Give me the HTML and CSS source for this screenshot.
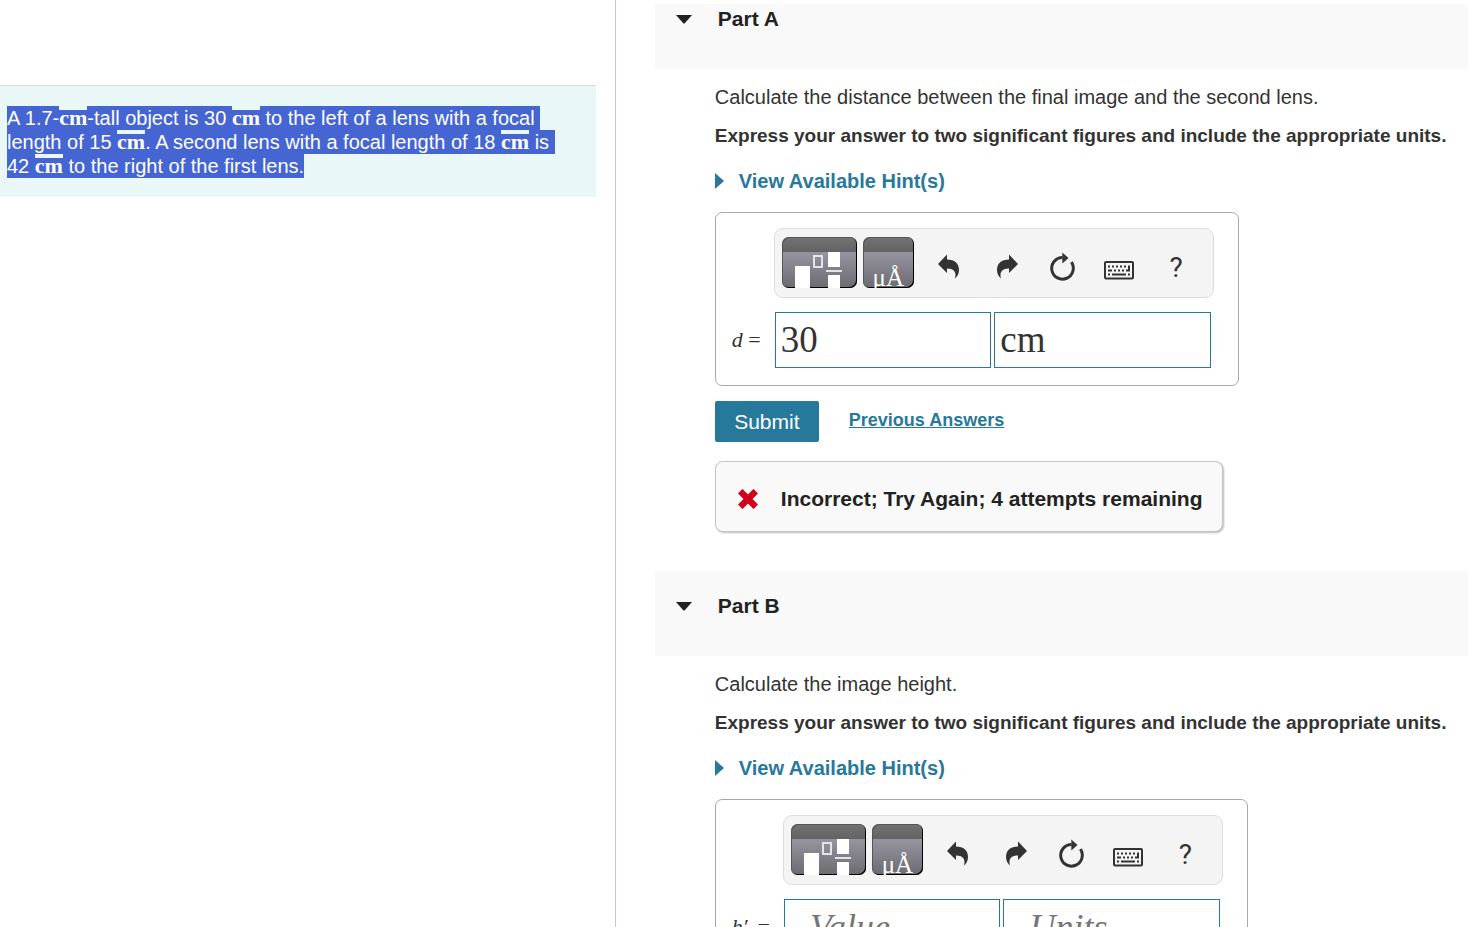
FILE: index.html
```
<!DOCTYPE html>
<html lang="en">
<head>
    <meta charset="UTF-8">
    <title>Part A - Part B</title>
    <link rel="stylesheet" href="styles.css">
</head>
<body>
    <svg class="sprite" aria-hidden="true">
        <symbol id="icon-templates" viewBox="0 0 75 51">
            <rect x="13" y="29" width="15" height="24" fill="#fff"/>
            <rect x="32" y="19" width="8" height="11" fill="none" stroke="#e4e4e8" stroke-width="2"/>
            <rect x="46" y="15" width="12" height="15" fill="#fff"/>
            <rect x="44" y="33" width="16" height="2" fill="#e4e4e8"/>
            <rect x="46" y="38" width="12" height="15" fill="#fff"/>
        </symbol>
        <symbol id="icon-undo" viewBox="0 0 57 51">
            <path d="M18 27 27 17.5V22.5C34.5 22.5 39 26.5 39 33C39 37 37 40 35 41.5C36.500 36 35 31.500 27 31.500V36Z"/>
        </symbol>
        <symbol id="icon-redo" viewBox="0 0 57 51">
            <path d="M41 27 32 17.500V22.500C24.500 22.500 20 26.500 20 33C20 37 22 40 24 41.500C22.500 36 24 31.500 32 31.500V36Z"/>
        </symbol>
        <symbol id="icon-reset" viewBox="0 0 57 51">
            <path d="M37.400 25.200A10.800 10.800 0 1 1 28.500 20.500" fill="none" stroke="#333" stroke-width="3"/>
            <path d="M28.300 15.500 34.500 21 28.300 26.500Z"/>
        </symbol>
        <symbol id="icon-keyboard" viewBox="0 0 57 51">
            <rect x="14" y="25" width="28" height="16.500" rx="1" fill="none" stroke="#333" stroke-width="2"/>
            <path d="M17 28.500h2v2h-2zM21 28.500h2v2h-2zM25 28.500h2v2h-2zM29 28.500h2v2h-2zM33 28.500h2v2h-2zM37 28.500h2v6h-4v-2h2zM17 32.500h4v2h-4zM23 32.500h2v2h-2zM27 32.500h2v2h-2zM31 32.500h2v2h-2zM17 36.500h2v2h-2zM21 36.500h14v2h-14zM37 36.500h2v2h-2z"/>
        </symbol>
    </svg>

    <div class="page">
        <aside class="problem">
            <p class="intro"><mark>A 1.7-<span class="unit">cm</span>-tall object is 30 <span class="unit">cm</span> to the left of a lens with a focal&nbsp;</mark><br>
            <mark>length of 15 <span class="unit">cm</span>. A second lens with a focal length of 18 <span class="unit">cm</span> is&nbsp;</mark><br>
            <mark>42 <span class="unit">cm</span> to the right of the first lens.</mark></p>
        </aside>

        <main class="parts">
            <section>
                <h2 class="part-header part-first">
                    <svg class="caret" width="16" height="9" viewBox="0 0 16 9"><path d="M0 0H16L9 8Q8 9 7 8Z"/></svg>
                    Part A
                </h2>
                <div class="part-body">
                    <p class="question">Calculate the distance between the final image and the second lens.</p>
                    <p class="instructions">Express your answer to two significant figures and include the appropriate units.</p>
                    <a class="hints" href="#hints-a">View Available Hint(s)</a>
                    <form class="answer">
                        <div class="toolbar">
                            <button type="button" class="tool-menu" aria-label="Templates"><svg width="75" height="51"><use href="#icon-templates"/></svg></button>
                            <button type="button" class="tool-menu tool-symbols" aria-label="Symbols"><span>μÅ</span></button>
                            <button type="button" class="tool" aria-label="Undo"><svg width="57" height="51"><use href="#icon-undo"/></svg></button>
                            <button type="button" class="tool" aria-label="Redo"><svg width="57" height="51"><use href="#icon-redo"/></svg></button>
                            <button type="button" class="tool" aria-label="Reset"><svg width="57" height="51"><use href="#icon-reset"/></svg></button>
                            <button type="button" class="tool" aria-label="Keyboard shortcuts"><svg width="57" height="51"><use href="#icon-keyboard"/></svg></button>
                            <button type="button" class="tool tool-help">?</button>
                        </div>
                        <label for="value-a"><i>d</i> =</label>
                        <div class="fields">
                            <input id="value-a" type="text" value="30">
                            <input type="text" value="cm" aria-label="Units">
                        </div>
                    </form>
                    <div class="actions">
                        <button type="button" class="submit">Submit</button>
                        <a href="#previous">Previous Answers</a>
                    </div>
                    <div class="feedback">
                        <svg width="20" height="20" viewBox="0 0 20 20"><path d="M4.500 4.500 15.500 15.500M15.500 4.500 4.500 15.500" stroke="#d0021b" stroke-width="6.500" stroke-linecap="square"/></svg>
                        Incorrect; Try Again; 4 attempts remaining
                    </div>
                </div>
            </section>

            <section>
                <h2 class="part-header">
                    <svg class="caret" width="16" height="9" viewBox="0 0 16 9"><path d="M0 0H16L9 8Q8 9 7 8Z"/></svg>
                    Part B
                </h2>
                <div class="part-body">
                    <p class="question">Calculate the image height.</p>
                    <p class="instructions">Express your answer to two significant figures and include the appropriate units.</p>
                    <a class="hints" href="#hints-b">View Available Hint(s)</a>
                    <form class="answer">
                        <div class="toolbar">
                            <button type="button" class="tool-menu" aria-label="Templates"><svg width="75" height="51"><use href="#icon-templates"/></svg></button>
                            <button type="button" class="tool-menu tool-symbols" aria-label="Symbols"><span>μÅ</span></button>
                            <button type="button" class="tool" aria-label="Undo"><svg width="57" height="51"><use href="#icon-undo"/></svg></button>
                            <button type="button" class="tool" aria-label="Redo"><svg width="57" height="51"><use href="#icon-redo"/></svg></button>
                            <button type="button" class="tool" aria-label="Reset"><svg width="57" height="51"><use href="#icon-reset"/></svg></button>
                            <button type="button" class="tool" aria-label="Keyboard shortcuts"><svg width="57" height="51"><use href="#icon-keyboard"/></svg></button>
                            <button type="button" class="tool tool-help">?</button>
                        </div>
                        <label for="value-b"><i>h′</i>&thinsp; =</label>
                        <div class="fields">
                            <input id="value-b" type="text" placeholder="Value">
                            <input type="text" placeholder="Units" aria-label="Units">
                        </div>
                    </form>
                </div>
            </section>
        </main>
    </div>
</body>
</html>
```
FILE: styles.css
```
* {
    box-sizing: border-box;
}

body {
    margin: 0;
    height: 100vh;
    overflow: hidden;
    background: #fff;
    color: #333;
    font: 20px/24px "Liberation Sans", Arial, sans-serif;
}

p, h2 {
    margin: 0;
}

.sprite {
    display: none;
}

.page {
    display: flex;
    height: 100%;
}

/* left column */
.problem {
    flex: 0 0 41.95%;
    padding: 85px 19px 0 0;
    border-right: 1px solid #c3c8d4;
}

.intro {
    padding: 20px 7px 19px;
    border-top: 1px solid #d5dadf;
    background: #e9f7f7;
    white-space: nowrap;
}

.intro mark {
    display: inline-block;
    height: 24px;
    vertical-align: top;
    background: #4565d2;
    color: #fff;
}

.unit {
    display: inline-block;
    height: 24px;
    border-top: 4px solid #e9f7f7;
    vertical-align: top;
    font: bold 22px/16px "Liberation Serif", serif;
}

/* right column */
.parts {
    flex: 1;
    min-width: 0;
    padding: 4px 0 0 39px;
}

.part-header {
    display: flex;
    align-items: center;
    gap: 26px;
    padding: 23px 21px 38px;
    background: #f9f9f9;
    color: #222;
    font-size: 21px;
    line-height: 24px;
}

.part-first {
    padding-top: 3px;
}

.caret {
    fill: #222;
}

.part-body {
    padding: 16px 0 39px 60px;
    white-space: nowrap;
}

.instructions {
    margin: 15px 0 21px;
    font-size: 19px;
    font-weight: bold;
}

.hints {
    display: flex;
    align-items: center;
    gap: 15px;
    color: #27799c;
    font-weight: bold;
    text-decoration: none;
}

.hints::before {
    content: "";
    border: 8px solid transparent;
    border-left: 9px solid #27799c;
    border-right: 0;
}

.answer {
    display: inline-grid;
    grid-template-columns: auto 440px;
    column-gap: 13px;
    row-gap: 14px;
    align-items: center;
    margin-top: 19px;
    padding: 15px 24px 17px 16px;
    border: 1px solid #a9a9a9;
    border-radius: 7px;
    vertical-align: top;
}

.answer label {
    font: 22px/24px "Liberation Serif", serif;
}

.toolbar {
    grid-column: 2;
    display: flex;
    height: 70px;
    padding: 8px 7px;
    border: 1px solid #ddd;
    border-radius: 9px;
    background: #f4f4f4;
}

.toolbar button {
    flex: none;
    height: 51px;
    padding: 0;
}

.toolbar svg {
    display: block;
}

.tool {
    width: 57px;
    border: 0;
    background: none;
    color: #333;
    fill: #333;
    font: 28px/32px Roboto, sans-serif;
}

.toolbar .tool-help {
    padding-top: 10px;
}

.toolbar .tool-menu {
    width: 75px;
    margin-right: 6px;
    overflow: hidden;
    border: 0;
    border-radius: 7px;
    background: linear-gradient(#737373, #636363 15px, #9694a0 15px, #6c6b70);
    box-shadow: inset -1px -1px #000, inset 1px 1px #555;
}

.toolbar .tool-symbols {
    width: 51px;
    padding: 27px 0 0;
    color: #fff;
    font: 25px/28px "Liberation Serif", serif;
}

.fields {
    display: flex;
    gap: 3px;
    padding: 0 3px 0 1px;
}

.fields input {
    flex: 1;
    min-width: 0;
    height: 56px;
    padding: 0 5px 2px;
    border: 1px solid #27799c;
    border-radius: 0;
    background: #fff;
    color: #333;
    font: 37px/40px "Liberation Serif", serif;
}

.fields input::placeholder {
    color: #757575;
    font-size: 36px;
    font-style: italic;
    text-indent: 20px;
}

.actions {
    display: flex;
    gap: 30px;
    margin: 15px 0 19px;
}

.submit {
    width: 104px;
    height: 41px;
    padding: 0;
    border: 0;
    border-radius: 2px;
    background: #27799c;
    color: #fff;
    font: 21px/24px "Liberation Sans", Arial, sans-serif;
}

.actions a {
    padding-top: 7px;
    color: #27799c;
    font-size: 18px;
    font-weight: bold;
}

.feedback {
    display: inline-flex;
    align-items: center;
    gap: 23px;
    height: 71px;
    padding: 4px 20px 0 22px;
    border: 1px solid #c4c4c4;
    border-radius: 8px;
    background: #f9f9f9;
    box-shadow: 1px 1px 2px #bbb;
    color: #222;
    font-size: 21px;
    font-weight: bold;
    vertical-align: top;
}
```
